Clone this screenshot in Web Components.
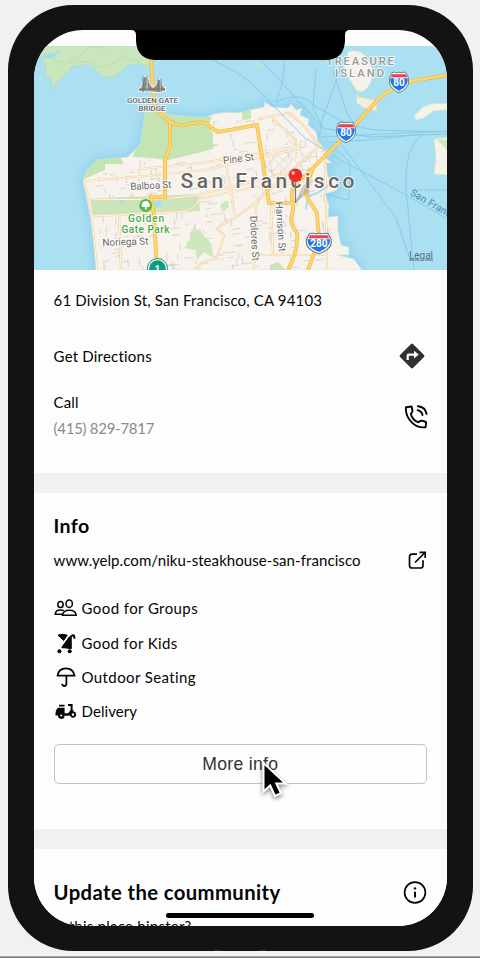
<!DOCTYPE html>
<html lang="en">
<head>
<meta charset="utf-8">
<title>Business details</title>
<style>
html,body{margin:0;height:958px;overflow:hidden;background:#f1f1f1}
body{font-family:Lato,"Noto Sans",sans-serif;color:#050505}
</style>
</head>
<body>
<phone-frame>
  <city-map></city-map>
  <detail-section style="--h:203px">
    <info-row style="--h:60px"><fit-text w="268.5" size="15">61 Division St, San Francisco, CA 94103</fit-text></info-row>
    <info-row style="--h:52px;--shift:2px"><fit-text w="98.5" size="15">Get Directions</fit-text><app-icon slot="icon" name="directions" w="26" h="26"></app-icon></info-row>
    <info-row style="--h:65px;--shift:-1px"><fit-text w="25" size="15">Call</fit-text><fit-text w="100.5" size="15" class="sub">(415) 829-7817</fit-text><app-icon slot="icon" name="phone" w="24" h="28"></app-icon></info-row>
  </detail-section>
  <section-band></section-band>
  <detail-section style="--h:336px">
    <info-row style="--h:66px"><fit-text w="36" size="19.6" weight="700">Info</fit-text></info-row>
    <info-row style="--h:2px"><fit-text w="307" size="15">www.yelp.com/niku-steakhouse-san-francisco</fit-text><app-icon slot="icon" name="external" w="20" h="20"></app-icon></info-row>
    <amenity-list>
      <amenity-row icon="groups"><fit-text w="116.5" size="15">Good for Groups</fit-text></amenity-row>
      <amenity-row icon="kids"><fit-text w="96" size="15">Good for Kids</fit-text></amenity-row>
      <amenity-row icon="umbrella"><fit-text w="114.5" size="15">Outdoor Seating</fit-text></amenity-row>
      <amenity-row icon="scooter"><fit-text w="55.5" size="15">Delivery</fit-text></amenity-row>
    </amenity-list>
    <more-button>More info</more-button>
  </detail-section>
  <section-band></section-band>
  <detail-section style="--h:77px">
    <info-row style="--h:86px"><fit-text w="227" size="20.3" weight="700">Update the coummunity</fit-text><app-icon slot="icon" name="info" w="24" h="24"></app-icon></info-row>
    <question-line><fit-text w="138" size="15">Is this place hipster?</fit-text></question-line>
  </detail-section>
</phone-frame>
<script>
const define=(name,html,setup)=>customElements.define(name,class extends HTMLElement{
  constructor(){super();this.attachShadow({mode:'open'});}
  connectedCallback(){this.shadowRoot.innerHTML=typeof html==='function'?html(this):html;if(setup)setup(this);}
});

define('phone-frame',`<style>
:host{display:block;position:relative;width:480px;height:958px;background:#f1f1f1}
.body{box-sizing:border-box;margin-left:8px;width:465px;height:945.5px;background:#131313;border-radius:65px;padding:25px 26px 24.5px 26px}
.wrap{padding-top:5px}
.screen{height:896px;box-sizing:border-box;padding-top:16px;background:#fdfdfd;border-radius:49px;overflow:hidden;display:flex;flex-direction:column}
.notch{position:absolute;left:131px;top:30px}
.home{position:absolute;left:166px;top:913px;width:148px;height:5px;border-radius:3px;background:#000}
.edge{position:absolute;left:0;bottom:0;width:480px;height:2px;background:#777;border-top:1px solid #aaa;box-sizing:border-box}
.foot{position:absolute;left:214px;top:950px;width:52px;height:1px;display:flex;justify-content:space-between}
.foot i{width:7px;background:#333}
</style><div class="wrap"><div class="body"><div class="screen"><slot></slot></div></div></div>
<svg class="notch" width="219" height="30"><path d="M0 0H219Q214 0 214 5V11Q213 30 194 30H24Q6 29 5 11V5Q5 0 0 0Z"/></svg>
<div class="home"></div><div class="foot"><i></i><i></i></div><div class="edge"></div>
<mouse-pointer></mouse-pointer>`);

define('mouse-pointer',`<style>:host{position:absolute;left:260px;top:759px;filter:drop-shadow(0 2px 2px #0007)}svg{display:block}</style>
<svg width="30" height="44"><path d="M3.5 4V32.5L10.2 26.4L15 37L21 34.2L16.3 24.5H25.5Z" fill="#000" stroke="#fff" stroke-width="2"/></svg>`);

define('fit-text',`<style>:host{display:block;white-space:nowrap;line-height:26px}:host(.sub){color:#8b8b8b}</style><span><slot></slot></span>`,el=>{
  el.style.fontSize=el.getAttribute('size')+'px';
  el.style.fontWeight=el.getAttribute('weight')||400;
  const span=el.shadowRoot.querySelector('span');
  el.style.letterSpacing='0';
  const w=span.getBoundingClientRect().width;
  el.style.letterSpacing=((+el.getAttribute('w')-w)/el.textContent.length)+'px';
});

define('section-band',`<style>:host{display:block;flex:none;height:20px;background:#f1f1f1}</style>`);
define('detail-section',`<style>:host{display:block;flex:none;box-sizing:border-box;height:var(--h);padding:0 20px 0 19.6px;background:#fdfdfd}</style><slot></slot>`);
define('info-row',`<style>:host{display:flex;height:var(--h);align-items:center;justify-content:space-between}
::slotted([slot=icon]){margin-right:var(--shift,0)}</style><div><slot></slot></div><slot name="icon"></slot>`);
define('amenity-list',`<style>:host{display:flex;flex-direction:column;padding-top:30px;margin-bottom:15.4px}</style><slot></slot>`);
define('amenity-row',el=>`<style>:host{display:flex;height:34.4px;align-items:center;gap:4px}</style><app-icon name="${el.getAttribute('icon')}" w="24" h="24"></app-icon><slot></slot>`);
define('more-button',`<style>:host{display:block}button{width:373.4px;height:40px;display:block;box-sizing:border-box;border:1px solid #c3c3c3;border-radius:5px;background:#fdfdfd;color:#333;font:17.6px/38px "Liberation Sans",Arial,sans-serif;padding:0;letter-spacing:.3px}</style><button><slot></slot></button>`);
define('question-line',`<style>:host{display:block;margin-top:-22px}</style><slot></slot>`);

const icons={
directions:['0 0 26 26','<path d="M13 2L24 13L13 24L2 13Z" fill="#303030" stroke="#303030" stroke-width="2.8" stroke-linejoin="round"/><path d="M8.7 17V12.7Q8.7 11.6 9.8 11.6H17" fill="none" stroke="#fff" stroke-width="2.2"/><path d="M15 7.7L19.8 11.6L15 15.5Z" fill="#fff"/>'],
phone:['0 -3 24 28','<g fill="none" stroke="#050505" stroke-width="1.9" stroke-linecap="round" stroke-linejoin="round"><path d="M2 3.2L7.6 2.5Q8.5 5.5 8.3 7.4Q8 9 6.8 9.8C7.5 14 11.5 18 14.7 18.3Q15.7 16.6 17.8 16.8Q20.2 17 22.2 18.2L21.6 23.2C10.7 24.7 .8 14 2 3.2Z"/><path d="M13.6 6.2Q17.8 7.4 18.5 11M13.8 2.2Q21.5 3 22.6 10"/></g>'],
external:['0 0 20 20','<g fill="none" stroke="#050505" stroke-width="1.7"><path d="M10 4.2H5Q2.5 4.2 2.5 6.7V15.5Q2.5 18 5 18H13.5Q16 18 16 15.5V10.2"/><path d="M8 12.5L18 2.5M12.5 2.3H18.2V8"/></g>'],
groups:['0 0 24 24','<g fill="none" stroke="#050505" stroke-width="1.5"><ellipse cx="15.2" cy="7.7" rx="3.2" ry="3.7"/><ellipse cx="6.5" cy="8.5" rx="2.7" ry="3.1"/><path d="M8.5 19.3Q9 14.2 15.5 14.2Q21.7 14.2 22.2 19.3ZM8.2 18.2H1.2Q1.5 14.1 6.5 14.1Q8.5 14.1 9.8 14.6"/></g>'],
kids:['0 0 24 24','<path d="M4 4.2Q8 2.2 13.2 4.2L9.7 9.5Z" stroke="#050505"/><path d="M15 6.5L7.8 16.5L17 17.5Z" stroke="#050505"/><path d="M8.2 17L16.5 6Q20.5 1.6 20.4 7.8M16.8 6V17.8" fill="none" stroke="#050505" stroke-width="2"/><circle cx="5.4" cy="20.3" r="2"/><circle cx="15.7" cy="20.3" r="2"/>'],
umbrella:['0 0 24 24','<g fill="none" stroke="#050505" stroke-width="1.8"><path d="M3.6 10.7Q4.5 3.3 12 3.3Q19.4 3.3 20.4 10.7Z"/><path d="M12.4 11V18.7Q12.3 21 10.3 21Q8.3 21 8.2 18.7"/></g>'],
scooter:['0 0 24 24','<path d="M5 5.8H10.5V7.6H5ZM4 8.8H10.6V14.2H14.2L16.6 11V7H14V5H18.6V11L15.5 16.7H10.5A3.2 3.2 0 0 1 4 16.6H1.5Q1.3 10.5 4 8.8Z"/><circle cx="7.2" cy="16.5" r="1" fill="#fdfdfd"/><circle cx="19" cy="15.6" r="2.2" fill="none" stroke="#050505" stroke-width="1.8"/><path d="M17 12H19.5" stroke="#050505" stroke-width="1.8"/>'],
info:['0 0 24 24','<circle cx="12" cy="12.5" r="10.4" fill="none" stroke="#050505" stroke-width="1.7"/><path d="M12 11.7V17.6" stroke="#050505" stroke-width="2"/><circle cx="12" cy="8.4" r="1.2"/>']};
define('app-icon',el=>{const [box,art]=icons[el.getAttribute('name')];
  return `<style>:host{display:block;flex:none}svg{display:block}</style><svg width="${el.getAttribute('w')}" height="${el.getAttribute('h')}" viewBox="${box}" fill="#050505">${art}</svg>`;});

const shield=(x,y,t,s=1)=>`<g transform="translate(${x} ${y}) scale(${s} 1)"><path d="M-7-9.5L-4.5-9.8Q-2-8.8 0-9.8Q2-8.8 4.5-9.8L7-9.5Q10.8-4 9.4 2Q7.5 7.5 0 10.8Q-7.5 7.5-9.4 2Q-10.8-4-7-9.5Z" fill="#f5f5f2" stroke="#63798b" stroke-width=".9"/><path d="M-6.8-7.8H6.8L8.2-4.8H-8.2Z" fill="#e5444c"/><path d="M-8.7-3.8H8.7Q9.6 4 0 9.1Q-9.6 4-8.7-3.8Z" fill="#2376e8"/></g><text x="${x}" y="${y+4.3}" text-anchor="middle" font-size="10" font-weight="700" fill="#fff">${t}</text>`;
const major='M150 46L153 90L155 105Q158 113 170 122Q178 126 185 125Q198 121 205 123L218 132L257 125L269 203H293M170 123V146L165 160V197H151L154 215L157 270M447 75L412 81Q385 90 373 105L347 134L313 168L296 184Q290 191 292 200Q295 206 291 218Q291 225 297 233Q299 249 288 270M313 168Q304 190 307 197L317 213L319 240L308 270';
const minor='M84 181Q150 176 205 170L250 160L301 148M90 199Q166 201 197 195L256 181L300 170M92 216Q150 214 185 211Q198 207 198 199L256 187L323 180M84 181L91 207L97 270M119 216L121 270M139 169V181M139 169L201 163L296 147M226 163L235 218M257 119L289 113L303 125L325 152M272 118L296 140V158M258 201L235 218L220 226L217 229L224 235L217 258L203 262L194 270M323 143L250 207M256 201V255H325M271 204L273 255M325 153L327 270M256 255L253 270M265 152L296 147';
let streets='';
const hv=(n)=>{const v=Math.sin(n*127.1)*43758.5453;return v-Math.floor(v);};
for(let i=0;i<300;i++){const x=94+hv(i)*236,y=116+hv(i+900)*152,l=3+hv(i+300)*7;streets+=i%2?`M${x.toFixed(1)} ${y.toFixed(1)}l${l.toFixed(1)}-1`:`M${x.toFixed(1)} ${y.toFixed(1)}l.6 ${l.toFixed(1)}`;}
const land='M145 111L152 108Q165 115 190 117L206 117L214 114Q229 111 238 113L249 110L264 107L265 102L272 107L288 108L291 104L296 110L302 108L300 115L309 119L308 125L316 132L318 141L325 149L332 153L326 158L332 163H326L328 177L337 182V190L325 194L329 205L328 217L338 216V230L341 245L349 247V255H338L354 259L362 270H96Q93 230 88 205L83 181L87 170L97 160L128 157L141 143Z';
define('city-map',`<style>:host{display:block;flex:none;height:224px}svg{display:block;font-family:Roboto,"Noto Sans",sans-serif}</style>
<svg width="414" height="224" viewBox="34 46 414 224">
<defs><clipPath id="land"><path d="${land}"/></clipPath><filter id="soft"><feGaussianBlur stdDeviation="3"/></filter>
<linearGradient id="shade" x1="0" y1="1" x2="1" y2="0"><stop stop-color="#555" stop-opacity=".5"/><stop offset="1" stop-color="#777" stop-opacity="0"/></linearGradient></defs>
<rect x="34" y="46" width="414" height="224" fill="#abdff2"/>
<path d="${land}" fill="none" stroke="#92d2ed" stroke-width="8" filter="url(#soft)" opacity=".8"/>
<path d="M38 46L43 61L46 67L45 75L51 80L54 90L56 83L64 76L73 66L90 65L101 75L107 78L118 75L127 65L139 64L151 67V46Z" fill="#c9e6bd" stroke="#b0dccd"/>
<path d="M43 55L61 51L54 57L44 59Z" fill="#a6dced"/><path d="M44 53Q65 70 80 55T105 50M63 65Q85 58 94 65T124 56L142 63" fill="none" stroke="#a9c99c" stroke-width=".7" stroke-dasharray="2 2"/>
<path d="${land}" fill="#f7f2ec" stroke="#c7e2dc" stroke-width=".7"/>
<g clip-path="url(#land)">
<path d="${streets}" fill="none" stroke="#c9c7c2" stroke-width=".65"/>
<path d="M143 108L167 114Q190 113 212 117L208 126L213 133V149L190 155L169 160L138 157L120 157L124 164H105V170L84 179V165L97 156L133 157Z" fill="#c4e5b3"/>
<path d="M91 199L198 194L200 211L154 212L92 215Z" fill="#c9e6bb"/><path d="M190 240L190 232L200 229L203 235L211 243L214 258L204 252L197 260L196 250L184 248Z M220 205L227 200L229 207L222 212Z" fill="#cce8bd"/>
<path d="M270 265L278 262L286 270H270ZM242 111L251 110V119L242 120Z" fill="#c8e6b5"/>
<path d="M119 200L124 199L125 203L119 203ZM154 202L160 200L162 208L155 207Z" fill="#a9dcea"/>
<path d="M277 155L289 164L278 177L266 167ZM289 140L311 162M281 147L304 170M272 157L295 180M303 140L274 170M313 150L281 181" fill="none" stroke="#ddd0c0" stroke-width=".8"/>
<path d="${minor}" fill="none" stroke="#efcf9f" stroke-width="2.2"/><path d="${minor}" fill="none" stroke="#fff8e6" stroke-width="1"/>
</g>
<path d="M307 197L317 193L328 186M306 209L309 191" fill="none" stroke="#a8dceb" stroke-width="2"/>
<g fill="none" stroke="#80c5e8" stroke-width=".8"><path d="M213 60Q235 70 251 83L304 137L344 162L397 190L448 219M261 60L323 128L369 137L447 134M276 102Q300 90 315 106L347 124L374 130L447 132M276 102Q286 76 284 60M316 68L313 108L323 128M343 62L322 120L319 137M321 137L448 131M331 142L370 140L423 134Q404 146 406 190L414 270M324 137L350 163L349 199L346 200L326 194M342 145L396 218L409 256M417 190H448M333 70L347 114L358 128"/></g>
<path d="M348 52Q360 48 367 58L373 70Q373 86 362 92L357 91Q349 80 344 68Z" fill="#f5f2eb" stroke="#d6e5d1"/><path d="M357 91L359 97L377 100V111L364 108L356 103Z" fill="#f1ede0" stroke="#c5dfbd"/>
<path d="M414 116L423 107L431 104L448 103V110L433 111L424 118L416 120ZM434 139L448 137V175L434 174L436 158Z" fill="#f3f3e6" stroke="#d3e6cf"/><path d="M436 139L447 140V150Z" fill="#d1e9bf"/><path d="M254 62L264 67L258 67Z" fill="#c8e4ba"/>
<path d="${major}" fill="none" stroke="#edb44f" stroke-width="3.7"/><path d="${major}" fill="none" stroke="#ffd765" stroke-width="2.4"/>
${shield(399,82,'80')}${shield(346,132,'80')}${shield(318.8,243,'280',1.28)}
<g fill="#8c8c8c" stroke="#f4f4f4" stroke-width="2" paint-order="stroke"><path d="M139 90Q143 88 144 77H146V91H139ZM148 91V77Q149 86 153 88Q157 86 158 80H160V92ZM161 80Q162 88 165 88V91H161Z"/></g><path d="M143 76V92M147 76V92M158 79V92M161 79V92M139 89H165M143 80H147M143 84H147" fill="none" stroke="#777"/>
<circle cx="145.7" cy="205.5" r="6.4" fill="#57b54c"/><path d="M144.9 207H143Q140.5 206 142 203.7Q142.5 201 145 201.3Q148 200.5 149 203Q151 205 149 207H146.6V209.5H144.9Z" fill="#fff"/>
<circle cx="157.5" cy="268.5" r="10" fill="#fff" stroke="#138c79"/><circle cx="157.5" cy="268.5" r="8.3" fill="#099c83"/>
<g paint-order="stroke" stroke="#fff" stroke-opacity=".8" stroke-width="2" stroke-linejoin="round" fill="#666">
<g font-size="8" font-weight="500"><text x="127" y="102.7" textLength="51" lengthAdjust="spacingAndGlyphs">GOLDEN GATE</text><text x="138.5" y="110.8" textLength="27" lengthAdjust="spacingAndGlyphs">BRIDGE</text></g>
<g font-size="11.3" font-weight="500" fill="#999"><text x="326" y="65" textLength="68">TREASURE</text><text x="335" y="77" textLength="49">ISLAND</text></g>
<g font-size="10"><text transform="translate(130.5 190) rotate(-3)" textLength="41">Balboa St</text><text transform="translate(223.5 164) rotate(-7)" textLength="31">Pine St</text><text transform="translate(102.5 246) rotate(-2)" textLength="46">Noriega St</text><text transform="translate(250 216) rotate(87)" textLength="45">Dolores St</text><text transform="translate(275.5 202) rotate(86)" textLength="50">Harrison St</text></g>
<text x="180.5" y="188" font-size="21" font-weight="500" textLength="174">San Francisco</text>
<g font-size="10" font-weight="500" fill="#4ba943"><text x="128" y="222" textLength="36">Golden</text><text x="121.5" y="232.7" textLength="48">Gate Park</text></g>
</g>
<text x="154.5" y="273" font-size="10" font-weight="700" fill="#fff">1</text>
<text transform="translate(409.5 194.5) rotate(30)" font-size="10" fill="#4388b4" textLength="46">San Franc</text>
<text x="409" y="258.5" font-size="10" fill="#59717f" text-decoration="underline" textLength="24">Legal</text>
<path d="M295.5 203L303 185L315 177L309 191Z" fill="url(#shade)"/><path d="M295.5 178V203" stroke="#777" stroke-width="1.2"/>
<circle cx="295.4" cy="175.3" r="6.8" fill="#f22a29"/><circle cx="293.2" cy="173" r="1.7" fill="#ffc2bb"/>
</svg>`);
</script>
</body>
</html>
